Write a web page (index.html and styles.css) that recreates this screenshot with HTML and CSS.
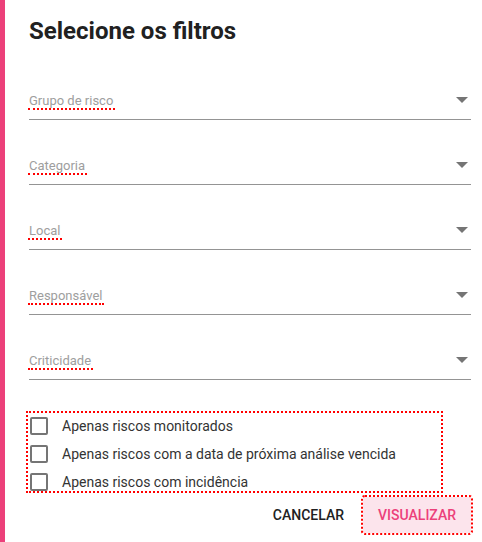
FILE: index.html
```html
<!DOCTYPE html>
<html lang="pt-BR">
<head>
    <meta charset="UTF-8">
    <meta name="viewport" content="width=device-width, initial-scale=1.0">
    <title>Selecione os filtros</title>
    <link rel="stylesheet" href="styles.css">
</head>
<body>
    <div class="dialog">
        <h1 class="title">Selecione os filtros</h1>

        <!-- Filtros -->
        <div class="field">
            <span class="label">Grupo de risco</span>
            <span class="arrow"></span>
        </div>
        <div class="field">
            <span class="label">Categoria</span>
            <span class="arrow"></span>
        </div>
        <div class="field">
            <span class="label">Local</span>
            <span class="arrow"></span>
        </div>
        <div class="field">
            <span class="label">Responsável</span>
            <span class="arrow"></span>
        </div>
        <div class="field">
            <span class="label">Criticidade</span>
            <span class="arrow"></span>
        </div>

        <!-- Opcoes -->
        <div class="checks">
            <label class="check"><span class="box"></span>Apenas riscos monitorados</label>
            <label class="check"><span class="box"></span>Apenas riscos com a data de próxima análise vencida</label>
            <label class="check"><span class="box"></span>Apenas riscos com incidência</label>
        </div>

        <div class="actions">
            <button class="btn">Cancelar</button>
            <button class="btn btn-primary">Visualizar</button>
        </div>
    </div>
</body>
</html>
```

FILE: styles.css
```css
* {
    margin: 0;
    padding: 0;
    box-sizing: border-box;
    font-family: Roboto, 'Liberation Sans', sans-serif;
}

body {
    min-height: 100vh;
    background: #fff;
    border-left: 5px solid #ec407a;
    overflow: hidden;
}

.dialog {
    padding: 15px 11px 0 24px;
}

.title {
    font-size: 24px;
    line-height: 32px;
    font-weight: 700;
    color: #212121;
    margin-bottom: 8px;
}

.field {
    height: 65px;
    display: flex;
    justify-content: space-between;
    align-items: flex-start;
    padding-top: 39px;
    border-bottom: 1px solid #949494;
}

.label {
    display: inline-block;
    font-size: 13px;
    line-height: 14px;
    color: #9e9e9e;
    padding: 0 2px 0 1px;
    margin-left: -1px;
    border-bottom: 2px dotted #f00;
}

.arrow {
    width: 0;
    height: 0;
    margin: 3px 3px 0 0;
    border-left: 6px solid transparent;
    border-right: 6px solid transparent;
    border-top: 6px solid #757575;
}

.checks {
    width: 417px;
    margin: 31px 0 0 -3px;
    padding: 4px 0 0 2px;
    border: 2px dotted #f00;
    display: flex;
    flex-direction: column;
    gap: 10px;
}

.check {
    display: flex;
    align-items: center;
    height: 18px;
    font-size: 14px;
    color: #333;
}

.box {
    width: 18px;
    height: 18px;
    border: 2px solid #757575;
    border-radius: 2px;
    margin-right: 14px;
}

.actions {
    display: flex;
    justify-content: flex-end;
    gap: 3px;
    margin-top: 4px;
}

.btn {
    height: 36px;
    padding: 0 16px;
    border: none;
    border-radius: 2px;
    background: none;
    font-size: 14px;
    font-weight: 500;
    text-transform: uppercase;
    color: #212121;
}

.btn-primary {
    padding: 0 15px;
    background: #fce4ec;
    color: #ec407a;
    outline: 2px dotted #f00;
}
```
